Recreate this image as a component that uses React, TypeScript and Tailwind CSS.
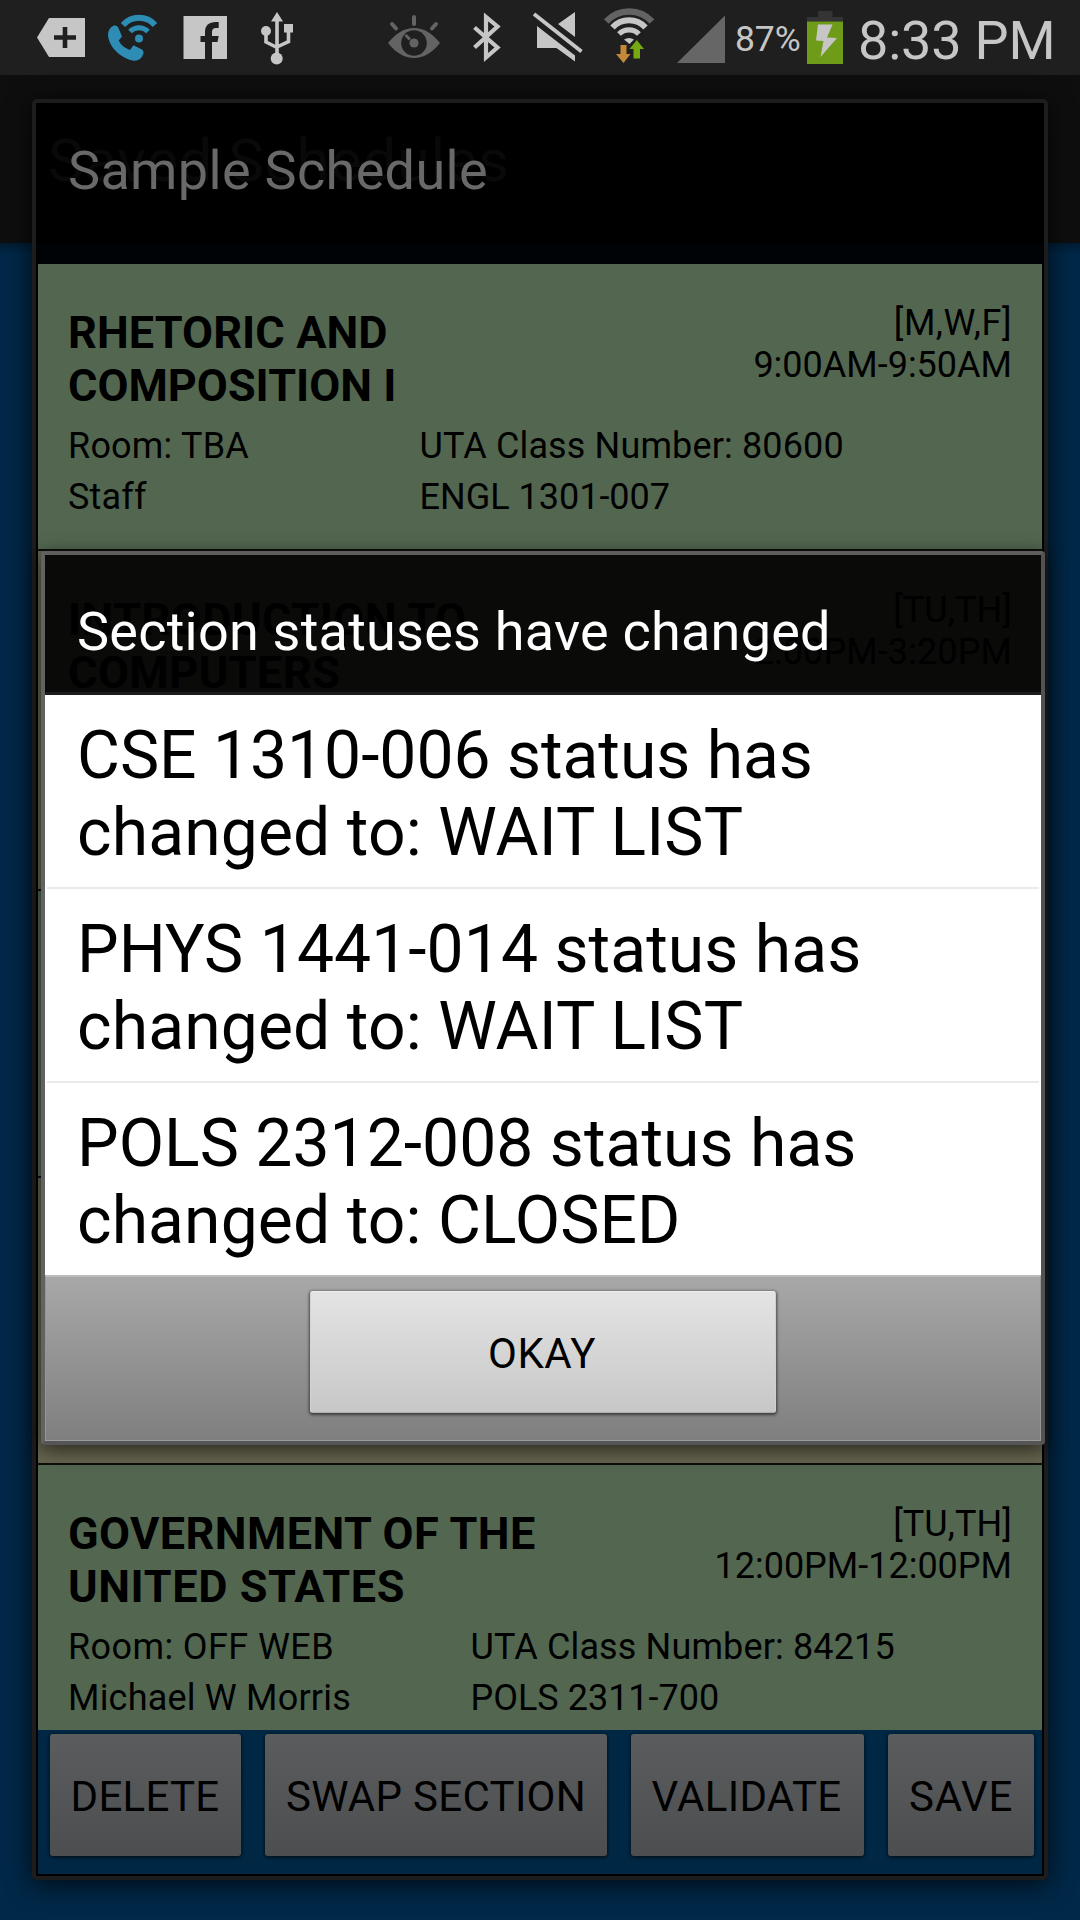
import React from "react";

function StatusBar() {
  return (
    <header className="flex h-[75px] shrink-0 items-start bg-[#1f1f1f] text-[#c6c6c6]">
      <svg className="shrink-0" width="735" height="75" viewBox="0 0 735 75" fill="#c6c6c6">
        <path d="M37 37.5L49 18H85V57H49Z" />
        <path d="M54 37.5H76M65 27V48" stroke="#1f1f1f" strokeWidth="4.6" />
        <g fill="none" stroke="#2e8db5">
          <path d="M123 25A21.5 21.5 0 0 1 155 25" strokeWidth="6" />
          <path d="M130 31.5A12.5 12.5 0 0 1 148 31.5" strokeWidth="5" />
        </g>
        <circle cx="139" cy="38.5" r="4" fill="#2e8db5" />
        <path
          d="M114 25.5Q108 28 108 35C109 48 122 59 134 60.7Q141 61 143.5 53.5Q144 51 142 49.5L133.5 45.3L130 50Q122 47.5 118.7 40.5L122 36.5L118 27Q116.5 25 114 25.5Z"
          fill="#2e8db5"
        />
        <path d="M183.5 16H227V59H183.5Z" />
        <path
          d="M205 59.5V42H200.5V36H205V32Q205 22 216 22H218.7V28H216Q212 28 212 32V36H218.7L217.5 42H212V59.5Z"
          fill="#1f1f1f"
        />
        <path d="M277 12L271 21.5H283ZM284 24H293V32.5H284Z" />
        <circle cx="266" cy="31" r="5" />
        <circle cx="276.7" cy="58.5" r="6" />
        <path
          d="M277 20V56M266 31V42L277 47.5M288.500 31V41.5L277 47"
          fill="none"
          stroke="#c6c6c6"
          strokeWidth="3.6"
        />
        <path
          d="M414 17V24M392 24L396 28.5M436 24L432 28.5"
          fill="none"
          stroke="#636363"
          strokeWidth="4"
          strokeLinecap="round"
        />
        <path d="M388 43Q400 28 414 28T440 43Q428 58 414 58T388 43Z" fill="#636363" />
        <circle cx="414" cy="43" r="12.8" fill="#1f1f1f" />
        <circle cx="414" cy="43" r="4.6" fill="#636363" />
        <path d="M405.5 35L410 39.5" stroke="#636363" strokeWidth="3" />
        <path
          d="M474.5 27.5L497.5 47.5L486 57.5V17L497.5 26.5L474.5 47.5"
          fill="none"
          stroke="#c6c6c6"
          strokeWidth="4.2"
        />
        <path d="M558 24L575 12V37ZM537 26V48H556.5L575 61.5V55.5Z" />
        <path d="M534 14L581.5 51.5" stroke="#c6c6c6" strokeWidth="3.8" />
        <g fill="none">
          <path d="M606.3 21.5A31 31 0 0 1 652 21.5" stroke="#636363" strokeWidth="6.5" />
          <path d="M612.5 27.5A22.5 22.5 0 0 1 645.5 27.5" stroke="#c6c6c6" strokeWidth="6" />
          <path d="M619 34A14 14 0 0 1 639 34" stroke="#c6c6c6" strokeWidth="5.2" />
        </g>
        <path d="M624 39.5Q629 36.5 634 39.5L629.5 44Z" />
        <path d="M620.5 45H626.5V54H630.5L623.5 63L616 54H620.5Z" fill="#c4883a" />
        <path d="M636.8 40L644 49H640V58.5H633.5V49H629.5Z" fill="#75a811" />
        <path d="M677 63L725 15.5V63Z" fill="#666666" />
      </svg>
      <span className="w-[72px] pt-[18px] text-[35.5px] leading-[42px] tracking-[-0.1px]">87%</span>
      <svg className="shrink-0" width="36" height="75" viewBox="807 0 36 75">
        <path d="M818 11H832.5V17H843V21.5H807V17H818Z" fill="#343434" />
        <path d="M807 21.5H843V64H807Z" fill="#6e9c18" />
        <path d="M818 24.5H832.5L827 37.5L837 38L820.5 57L823.5 41L816 40.5Z" fill="#c6c6c6" />
      </svg>
      <span className="whitespace-nowrap pl-[15px] pt-[9px] text-[54px] leading-[64px] tracking-[-0.2px]">8:33 PM</span>
    </header>
  );
}

type Course = {
  title: { text: string; cls: string }[];
  days: string;
  daysCls?: string;
  time: string;
  room?: string;
  roomCls?: string;
  staff?: string;
  number?: string;
  section?: string;
  frame: string;
  colWidth?: string;
};

const courses: Course[] = [
  {
    title: [
      { text: "RHETORIC AND", cls: "tracking-[0.1px]" },
      { text: "COMPOSITION I", cls: "tracking-[0px]" },
    ],
    days: "[M,W,F]",
    daysCls: "tracking-[0.55px]",
    time: "9:00AM-9:50AM",
    room: "Room: TBA",
    roomCls: "tracking-[0.2px]",
    staff: "Staff",
    number: "UTA Class Number: 80600",
    section: "ENGL 1301-007",
    frame: "h-[287px] border-b-2 bg-[#536750]",
    colWidth: "w-[351.5px]",
  },
  { title: [], days: "", time: "", frame: "h-[340px] border-b-2 bg-[#65644e]" },
  { title: [], days: "", time: "", frame: "h-[287px] border-b-2 bg-[#536750]" },
  { title: [], days: "", time: "", frame: "h-[287px] border-b-2 bg-[#65644e]" },
  {
    title: [
      { text: "GOVERNMENT OF THE", cls: "tracking-[0.4px]" },
      { text: "UNITED STATES", cls: "tracking-[0.6px]" },
    ],
    days: "[TU,TH]",
    daysCls: "tracking-[0.1px]",
    time: "12:00PM-12:00PM",
    room: "Room: OFF WEB",
    roomCls: "tracking-[0.4px]",
    staff: "Michael W Morris",
    number: "UTA Class Number: 84215",
    section: "POLS 2311-700",
    frame: "h-[265px] bg-[#536750]",
    colWidth: "w-[402.5px]",
  },
];

function CourseRow({ course }: { course: Course }) {
  return (
    <article className={`shrink-0 overflow-hidden border-[#0d0e0c] px-[30px] text-black ${course.frame}`}>
      <div className="flex h-[148px] justify-between">
        <h2 className="whitespace-nowrap pt-[42px] text-[45px] font-bold leading-[53px]">
          {course.title.map((line) => (
            <span key={line.text} className={`block ${line.cls}`}>
              {line.text}
            </span>
          ))}
        </h2>
        <div className="whitespace-nowrap pt-[38px] text-right text-[36px] leading-[42px]">
          <p className={course.daysCls}>{course.days}</p>
          <p>{course.time}</p>
        </div>
      </div>
      {course.room && (
        <div className="flex pt-[13px] text-[36px] leading-[42px]">
          <div className={`flex shrink-0 flex-col gap-[9px] ${course.colWidth}`}>
            <p className={course.roomCls}>{course.room}</p>
            <p className="tracking-[0.2px]">{course.staff}</p>
          </div>
          <div className="flex flex-col gap-[9px] whitespace-nowrap">
            <p className="tracking-[0.14px]">{course.number}</p>
            <p>{course.section}</p>
          </div>
        </div>
      )}
    </article>
  );
}

const actions = [
  { label: "DELETE", cls: "w-[191px] pr-[1px] tracking-[0.25px]" },
  { label: "SWAP SECTION", cls: "ml-[24px] w-[342px] tracking-[0.3px]" },
  { label: "VALIDATE", cls: "ml-[24px] w-[233px] pr-[2px] tracking-[0.3px]" },
  { label: "SAVE", cls: "ml-[24px] w-[146px] tracking-[0.7px]" },
];

function ScheduleDialog() {
  return (
    <section className="absolute left-[32px] top-[99px] flex h-[1781px] w-[1016px] flex-col rounded-[5px] border-4 border-[#1d1d1d] bg-black px-[2px] pb-[2px] shadow-[0_4px_26px_rgba(0,0,0,0.75)]">
      <div className="-mx-[2px] h-[161px] shrink-0 bg-linear-to-b from-black from-[87%] to-[#000306] to-[87%] pl-[32px] pt-[36px]">
        <h1 className="relative text-[54px] leading-[64px] tracking-[0.33px] text-[#696969]">
          <span
            aria-hidden
            className="absolute -left-[20px] -top-[13px] whitespace-nowrap text-[60px] leading-[70px] tracking-[0.55px] text-[#090909]"
          >
            Saved Schedules
          </span>
          <span className="relative">Sample Schedule</span>
        </h1>
      </div>
      {courses.map((course, i) => (
        <CourseRow key={i} course={course} />
      ))}
      <div className="flex flex-1 items-start bg-[#002845] pl-[12px] pt-[4px]">
        {actions.map((action) => (
          <button
            key={action.label}
            className={`h-[122px] shrink-0 whitespace-nowrap rounded-[3px] bg-linear-to-b from-[#5b5c5d] to-[#4d4e4f] pb-[34px] pt-[38px] text-center text-[42px] leading-[50px] text-black shadow-[0_1px_4px_rgba(0,0,0,0.8)] ${action.cls}`}
          >
            {action.label}
          </button>
        ))}
      </div>
    </section>
  );
}

const notices = [
  ["CSE 1310-006 status has", "changed to: WAIT LIST", "tracking-[-0.03px]", "tracking-[0.12px]"],
  ["PHYS 1441-014 status has", "changed to: WAIT LIST", "tracking-[0.05px]", "tracking-[0.12px]"],
  ["POLS 2312-008 status has", "changed to: CLOSED", "tracking-[0.03px]", "tracking-[0.1px]"],
];

function StatusDialog() {
  return (
    <section className="absolute left-[41px] top-[551px] flex h-[894px] w-[1004px] flex-col rounded-[4px] border-4 border-t-[#5f5f5f] border-r-[#525252] border-b-[#555555] border-l-[#626262] bg-[#0a0a08] shadow-[0_4px_20px_rgba(0,0,0,0.65)]">
      <div className="relative h-[140px] shrink-0 border-b-[3px] border-[#1c1c1c] pl-[32px] pt-[45px]">
        <div aria-hidden className="absolute inset-0 text-black">
          <p className="absolute left-[23px] top-[38px] whitespace-nowrap text-[45px] font-bold leading-[53px] tracking-[0.45px]">
            INTRODUCTION TO
            <br />
            COMPUTERS
          </p>
          <p className="absolute right-[29px] top-[34px] whitespace-nowrap text-right text-[36px] leading-[42px] tracking-[0.1px]">
            [TU,TH]
            <br />
            2:00PM-3:20PM
          </p>
        </div>
        <h2 className="relative whitespace-nowrap text-[54px] leading-[64px] tracking-[0.23px] text-white">
          Section statuses have changed
        </h2>
      </div>
      <ul className="shrink-0 bg-white text-[66px] leading-[77px] text-black">
        {notices.map(([first, second, a, b], i) => (
          <li key={first} className={i > 0 ? "h-[194px]" : "h-[192px]"}>
            {i > 0 && <hr className="mx-[2px] h-[2px] border-0 bg-[#eaeaea]" />}
            <p className="whitespace-nowrap pl-[32px] pt-[22px]">
              <span className={a}>{first}</span>
              <br />
              <span className={b}>{second}</span>
            </p>
          </li>
        ))}
      </ul>
      <div className="flex flex-1 justify-center border-x border-b border-t-2 border-b-[#9c9c9c] border-t-[#bcbcbc] border-x-[#969696] bg-linear-to-b from-[#a8a8a8] to-[#7f7f7f] pt-[14px]">
        <button className="h-[122px] w-[466px] rounded-[3px] border border-b-[#b0b0b0] border-l-[#d4d4d4] border-r-[#d0d0d0] border-t-[#f0f0f0] bg-linear-to-b from-[#e4e4e4] to-[#c7c7c7] pb-[33px] pr-[2px] pt-[37px] text-[42px] leading-[50px] tracking-[0.5px] text-black shadow-[0_1px_3px_1px_rgba(0,0,0,0.55)]">
          OKAY
        </button>
      </div>
    </section>
  );
}

export default function App() {
  return (
    <main className="relative flex h-[1920px] w-[1080px] flex-col overflow-hidden bg-[#002848] font-['Roboto',sans-serif]">
      <StatusBar />
      <div className="h-[168px] shrink-0 bg-[#0e0e0e]" />
      <div className="h-[12px] bg-linear-to-b from-[#001c32] to-[#002848]" />
      <ScheduleDialog />
      <StatusDialog />
    </main>
  );
}
